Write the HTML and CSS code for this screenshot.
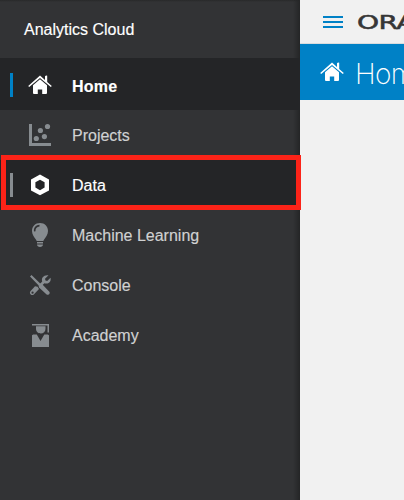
FILE: index.html
```
<!DOCTYPE html>
<html lang="en">
<head>
<meta charset="utf-8">
<title>Analytics Cloud</title>
<link rel="stylesheet" href="styles.css">
</head>
<body>
<svg width="0" height="0" class="defs">
  <symbol id="house" viewBox="0 0 24 20">
    <path d="M12 .5 L17 5 V1.3 Q18 .1 19.2 .8 V7 L23.8 11 L22.8 12 L12 2.9 L1.2 12 L.2 11 Z"/>
    <path d="M12 4.200 L19 10.200 V18 Q19 19 18 19 H14.2 V14.500 H9.800 V19 H6 Q5 19 5 18 V10.200 Z"/>
  </symbol>
</svg>
<div class="app">
  <nav class="sidebar">
    <h2 class="title">Analytics Cloud</h2>
    <a class="item home"><i class="mark"></i><svg class="icon" viewBox="0 0 24 24"><use href="#house" y="2" width="24" height="20"/></svg><span>Home</span></a>
    <a class="item"><i class="mark"></i><svg class="icon" viewBox="0 0 24 24"><path d="M1 1h3v19h19v3H1z"/><circle cx="8.3" cy="15.5" r="2.6"/><circle cx="12.4" cy="7.5" r="2.6"/><circle cx="16.4" cy="13.6" r="2.6"/><circle cx="19.5" cy="3.5" r="2.6"/></svg><span>Projects</span></a>
    <a class="item data"><i class="mark"></i><svg class="icon" viewBox="0 0 24 24"><path fill-rule="evenodd" d="M12 1.5 21 6.5v11L12 22.2 3 17.5v-11zM12 6.8 7.4 9.2v5.4L12 17.2l4.6-2.6V9.2z"/></svg><span>Data</span></a>
    <a class="item"><i class="mark"></i><svg class="icon" viewBox="0 0 24 24"><path fill-rule="evenodd" d="M12 0C7.3 0 4 3.5 4 8c0 3.8 2.3 6 3.9 8.6L8.7 18h6.6l.8-1.4C17.7 14 20 11.8 20 8c0-4.5-3.3-8-8-8zM6 8.5C5.3 5 8 1.8 11.5 1.8v1.7C8.8 3.7 7.2 5.6 7.5 8.3zM9 19h6v1.6H9zM9 21.400h6c0 1.400-1.300 2.500-3 2.500s-3-1.100-3-2.500z"/></svg><span>Machine Learning</span></a>
    <a class="item"><i class="mark"></i><svg class="icon" viewBox="0 0 24 24"><path fill-rule="evenodd" d="M20.500 2.300 17 5.800l.5 1.700 1.700.5 3.300-3.300c.8 3-1 5.700-3.900 5.800-1 .1-1.700-.1-2.200-.3l-2.600 2.500-1.900-1.800 2.300-2.400C13 4.900 15.700 1.600 20.500 2.300zM9.600 13.700 7 13.200 2.600 17.900c-2 2.200.9 5.300 3.200 3.500l5.200-5.300zM4.600 18.600a1.100 1.100 0 1 1-.1 2.200 1.100 1.100 0 0 1 .1-2.200z"/><path d="M2 3.400 3.500 2 12 10.300l2.200.9 6.900 7.200c1.700 1.700-.7 4.400-2.500 3L11 14.400l-.5-2.100z"/></svg><span>Console</span></a>
    <a class="item"><i class="mark"></i><svg class="icon" viewBox="0 0 24 24"><path d="M4 1h17v8.500h-1.500V2.600H4zM8 3.300h9.500v2.400c0 3-2.100 4.700-4.700 4.700S8 8.700 8 5.700zM4 12.200l1.200-.7h3.600l3.700 6.500 3.800-6.500h3.500l1.200.7V24H4z"/></svg><span>Academy</span></a>
    <div class="highlight"></div>
  </nav>
  <main class="main">
    <header class="brand"><div class="menu"><i></i><i></i><i></i></div><span class="logo">ORACLE</span></header>
    <div class="banner"><svg class="banner-icon"><use href="#house" width="24" height="20"/></svg><h1>Home</h1></div>
  </main>
</div>
</body>
</html>
```
FILE: styles.css
```
* { box-sizing: border-box; }
body { margin: 0; overflow: hidden; font-family: "Liberation Sans", Arial, sans-serif; }
.defs { position: absolute; }
.app { display: flex; width: 404px; height: 500px; overflow: hidden; background: #f1f1f1; }
.sidebar { position: relative; flex: 0 0 300px; background: linear-gradient(90deg, transparent 293px, #242526 300px), linear-gradient(#28292a, #323335 2px); color: #d0d1d2; }
.title { height: 58px; margin: 0; padding-left: 24px; font-size: 16px; line-height: 59px; font-weight: 400; color: #fff; -webkit-text-stroke: .15px; }
.item { display: flex; align-items: center; height: 50px; padding-left: 10px; font-size: 16px; -webkit-text-stroke: .15px; }
.item span { padding-top: 2px; line-height: 20px; }
.mark { width: 3px; height: 24px; margin-right: 15px; }
.icon { width: 24px; height: 24px; margin-right: 20px; fill: #878c90; }
.home, .data { color: #fff; background: #242527; }
.home .icon, .data .icon { fill: #fff; }
.home { height: 52px; padding-top: 2px; font-weight: 700; letter-spacing: .2px; }
.home span { padding-top: 4px; }
.home .mark { background: #0081c6; }
.data .mark { background: #878c90; }
.highlight { position: absolute; left: 1px; top: 155px; width: 300px; height: 55px; border: 5px solid #fc2318; z-index: 2; }
.main { flex: 1; min-width: 0; overflow: hidden; }
.brand { display: flex; align-items: center; height: 44px; padding: 1px 0 0 23px; border-bottom: 1px solid #d9dcde; }
.menu { display: flex; flex-direction: column; gap: 3px; flex: 0 0 20px; }
.menu i { height: 2px; background: #0081c6; }
.logo { margin-left: 14px; font: 400 18px "DejaVu Sans", sans-serif; -webkit-text-stroke: .5px #363636; color: #363636; letter-spacing: -.4px; transform: scale(1.56, 1.04); transform-origin: left; }
.banner { display: flex; align-items: center; height: 56px; padding-left: 20px; background: #0081c6; color: #fff; }
.banner-icon { flex: 0 0 24px; height: 20px; fill: #fff; }
.banner h1 { margin: 0 0 0 11px; padding-top: 4px; font: 200 28px Inter, sans-serif; letter-spacing: -.7px; }
```
